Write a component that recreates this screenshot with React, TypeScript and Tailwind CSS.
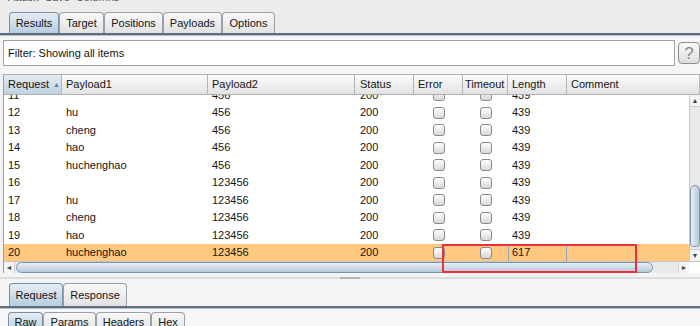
import React from "react";

type TabProps = { label: string; w: string; sel?: boolean; h?: string };

function Tab({ label, w, sel, h = "h-[21px]" }: TabProps) {
  return (
    <div
      className={
        `${w} ${h} flex items-center justify-center border border-b-0 rounded-t-[4px] ` +
        (sel
          ? "bg-linear-to-b from-[#e6edf4] to-[#b7cde0] border-[#7b90a5]"
          : "bg-linear-to-b from-[#f8f8f8] to-[#e2e2e2] border-[#97a1ab]")
      }
    >
      {label}
    </div>
  );
}

function Check() {
  return (
    <div className="w-[12px] h-[12px] rounded-[3px] border border-[#8a8a8a] bg-linear-to-b from-[#ffffff] to-[#d8d8d8]" />
  );
}

const rows: [number, string, string, string][] = [
  [11, "", "456", "439"],
  [12, "hu", "456", "439"],
  [13, "cheng", "456", "439"],
  [14, "hao", "456", "439"],
  [15, "huchenghao", "456", "439"],
  [16, "", "123456", "439"],
  [17, "hu", "123456", "439"],
  [18, "cheng", "123456", "439"],
  [19, "hao", "123456", "439"],
  [20, "huchenghao", "123456", "617"],
];

const headers: [string, string][] = [
  ["Payload1", "pl-[4px]"],
  ["Payload2", "pl-[4px]"],
  ["Status", "pl-[5px]"],
  ["Error", "pl-[4px]"],
  ["Timeout", "pl-[2px]"],
  ["Length", "pl-[4px]"],
  ["Comment", "pl-[4px]"],
];

export default function App() {
  return (
    <div className="relative w-[700px] h-[326px] overflow-hidden bg-[#f2f2f2] text-[11px] text-[#141414] font-['Liberation_Sans',Arial,sans-serif] leading-[13px]">
      {/* title strip (cut off) */}
      <div className="h-[12px] overflow-hidden bg-[#ececec] pl-[8px] text-[#555]">
        <div className="-mt-[9px] whitespace-nowrap">Attack&nbsp;&nbsp;Save&nbsp;&nbsp;Columns</div>
      </div>

      {/* top tabs */}
      <div className="flex pl-[9px] h-[21px] bg-[#ececec]">
        <Tab label="Results" w="w-[50px]" sel />
        <Tab label="Target" w="w-[45px]" />
        <Tab label="Positions" w="w-[59px]" />
        <Tab label="Payloads" w="w-[59px]" />
        <Tab label="Options" w="w-[53px]" />
      </div>
      <div className="h-[2px] bg-[#5f6e7f]" />
      <div className="h-[1px] bg-[#b6c0ca]" />

      {/* filter */}
      <div className="flex items-start pt-[4px] pl-[3px] bg-[#f6f6f6] h-[38px]">
        <div className="w-[673px] h-[26px] bg-white border border-[#a3a3a3] flex items-center pl-[4px]">
          Filter: Showing all items
        </div>
        <div className="ml-[3px] mt-[2px] w-[22px] h-[22px] rounded-[4px] border border-[#8e8e8e] bg-linear-to-b from-[#fafafa] to-[#dedede] flex items-center justify-center text-[17px] text-[#8a8a8a]">
          ?
        </div>
      </div>

      {/* table */}
      <div className="ml-[3px] border-l border-[#9c9c9c]">
        {/* header */}
        <div className="grid grid-cols-[58px_146px_147px_59px_49px_45px_59px_133px] h-[21px] border-t border-b border-[#b0b0b0]">
          <div className="flex items-center pl-[4px] border-r border-[#b5b5b5] bg-linear-to-b from-[#e3ebf2] to-[#bfd2e2]">
            Request
            <span className="ml-[4px] text-[7px] text-[#5d7fa3]">▲</span>
          </div>
          {headers.map(([h, pl]) => (
            <div
              key={h}
              className={`flex items-center ${pl} whitespace-nowrap border-r border-[#b5b5b5] bg-linear-to-b from-[#fcfcfc] to-[#e2e2e2]`}
            >
              {h}
            </div>
          ))}
        </div>

        {/* body */}
        <div className="flex h-[166px]">
          <div className="w-[685px] h-[166px] overflow-hidden bg-white">
            <div className="-mt-[8.5px]">
              {rows.map(([n, p1, p2, len]) => {
                const sel = n === 20;
                return (
                  <div
                    key={n}
                    className={
                      "grid grid-cols-[58px_146px_147px_59px_49px_45px_59px_122px] h-[17.5px] items-center " +
                      (sel ? "bg-[#fec97f]" : "bg-white")
                    }
                  >
                    <div className="pl-[4px]">{n}</div>
                    <div className="pl-[4px]">{p1}</div>
                    <div className="pl-[4px]">{p2}</div>
                    <div className="pl-[5px]">200</div>
                    <div className="flex justify-center">
                      <Check />
                    </div>
                    <div className="flex justify-center">
                      <Check />
                    </div>
                    {sel ? (
                      <div className="h-[17.5px] border border-[#95a6b6] flex items-center pl-[3px]">{len}</div>
                    ) : (
                      <div className="pl-[4px]">{len}</div>
                    )}
                    <div />
                  </div>
                );
              })}
            </div>
          </div>
          {/* vertical scrollbar */}
          <div className="w-[11px] flex flex-col bg-[#e9e9e9] border-l border-[#c8c8c8]">
            <div className="h-[12px] flex items-center justify-center text-[7px] text-[#444] bg-[#f4f4f4] border-b border-[#cfcfcf]">
              ▲
            </div>
            <div className="flex-1 flex flex-col justify-end pb-[2px]">
              <div className="h-[62px] rounded-t-[6px] rounded-b-[4px] border border-[#7c94aa] bg-linear-to-r from-[#e8eff6] to-[#b5c9da]" />
            </div>
            <div className="h-[12px] flex items-center justify-center text-[7px] text-[#444] bg-[#f4f4f4] border-t border-[#cfcfcf]">
              ▼
            </div>
          </div>
        </div>

        {/* horizontal scrollbar */}
        <div className="flex h-[12px] border-t border-[#c4c4c4]">
          <div className="w-[685px] flex bg-[#e9e9e9]">
            <div className="w-[11px] flex items-center justify-center text-[7px] text-[#444] bg-[#f4f4f4] border-r border-[#cfcfcf]">
              ◄
            </div>
            <div className="w-[637px] ml-[1px] rounded-l-[6px] rounded-r-[6px] border border-[#7c94aa] bg-linear-to-b from-[#e8eff6] to-[#b5c9da]" />
            <div className="flex-1" />
            <div className="w-[11px] flex items-center justify-center text-[7px] text-[#444] bg-[#f4f4f4] border-l border-[#cfcfcf]">
              ►
            </div>
          </div>
          <div className="w-[11px] bg-white" />
        </div>
      </div>

      {/* splitter */}
      <div className="h-[10px] flex flex-col justify-center bg-[#f4f4f4]">
        <div className="h-[2px] bg-[#dcdcdc] flex justify-center">
          <div className="w-[20px] h-[2px] bg-[#b4b4b4]" />
        </div>
      </div>

      {/* request / response tabs */}
      <div className="flex pl-[9px] h-[23px] bg-[#f4f4f4]">
        <Tab label="Request" w="w-[54px]" h="h-[23px]" sel />
        <Tab label="Response" w="w-[64px]" h="h-[23px]" />
      </div>
      <div className="h-[2px] bg-[#5f6e7f]" />
      <div className="h-[1px] bg-[#b6c0ca]" />

      {/* sub tabs */}
      <div className="flex pl-[8px] pt-[3px] bg-[#f6f6f6] h-[20px]">
        <Tab label="Raw" w="w-[35px]" h="h-[20px]" sel />
        <Tab label="Params" w="w-[53px]" h="h-[20px]" />
        <Tab label="Headers" w="w-[55px]" h="h-[20px]" />
        <Tab label="Hex" w="w-[34px]" h="h-[20px]" />
      </div>

      {/* red annotation box */}
      <div className="absolute left-[442px] top-[244px] w-[195px] h-[29px] border-2 border-[#ee2f3a]" />
    </div>
  );
}
